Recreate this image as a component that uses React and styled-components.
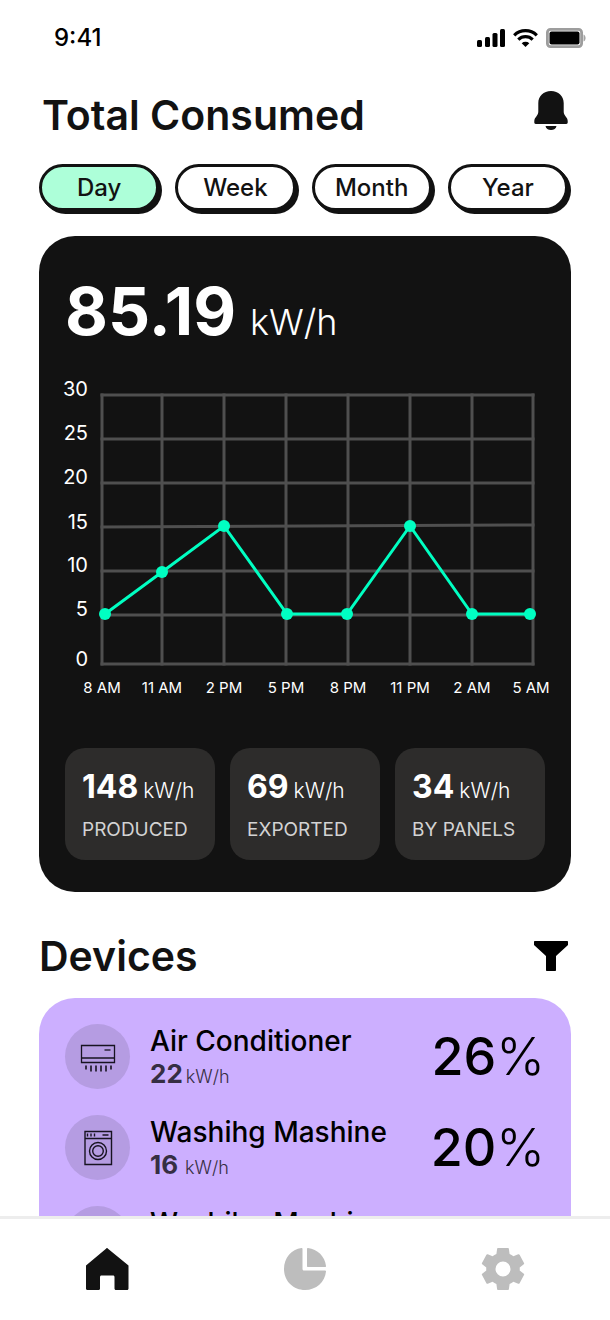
import React, { useState } from 'react'
import styled, { createGlobalStyle } from 'styled-components'

const GlobalStyle = createGlobalStyle`
  * { box-sizing: border-box; }
  body {
    margin: 0;
    background: #fff;
    color: #121212;
    font-family: Inter, sans-serif;
  }
  button { font: inherit; color: inherit; cursor: pointer; }
  h1, h2, h3, p, dl, dt, dd, ul { margin: 0; padding: 0; }
`

const Screen = styled.div`
  display: flex;
  flex-direction: column;
  height: 100vh;
  overflow: hidden;
`

const StatusBar = styled.header`
  display: flex;
  align-items: center;
  justify-content: space-between;
  flex: none;
  height: 76px;
  padding: 0 24px 0 54px;
  color: #000;
`

const Clock = styled.span`
  font-size: 24px;
  line-height: 28px;
  font-weight: 500;
`

const StatusIcons = styled.div`
  display: flex;
  align-items: center;
  gap: 8px;
`

const Content = styled.main`
  flex: 1;
  min-height: 0;
  overflow: auto;
  scrollbar-width: none;
  padding: 0 39px;
`

const SectionHead = styled.div`
  display: flex;
  align-items: center;
  justify-content: space-between;
  padding: ${({ $padding }) => $padding};
`

const Title = styled.h2`
  font-size: 41px;
  line-height: 48px;
  font-weight: 600;
`

const IconButton = styled.button`
  display: flex;
  padding: 0;
  border: 0;
  background: none;
`

const Periods = styled.div`
  display: flex;
  gap: 16px;
  padding: 10px 3px 25px 0;
`

const Period = styled.button`
  flex: 1;
  height: 47px;
  padding: 0;
  border: 3px solid #121212;
  border-radius: 24px;
  background: ${({ $active }) => ($active ? '#adffd9' : '#fff')};
  box-shadow: 1px 1px 0 #121212, 2px 2px 0 #121212, 3px 3px 0 #121212;
  font-size: 24px;
  line-height: 28px;
  font-weight: 500;
`

const Panel = styled.section`
  padding: 41px 26px 32px;
  border-radius: 36px;
  background: #121212;
  color: #fff;
`

const Total = styled.p`
  display: flex;
  align-items: baseline;
  gap: 14px;
  height: 100px;
  font-size: 66px;
  line-height: 68px;
  font-weight: 700;
`

const TotalUnit = styled.span`
  font-size: 36px;
  font-weight: 300;
`

const Chart = styled.svg`
  display: block;
  width: calc(100% + 10px);
  overflow: visible;
  font-family: Inter, sans-serif;
  fill: #fff;
`

const Stats = styled.dl`
  display: grid;
  grid-template-columns: repeat(3, 1fr);
  gap: 15px;
  padding-top: 51px;
`

const Stat = styled.div`
  display: flex;
  flex-direction: column-reverse;
  justify-content: flex-end;
  gap: 7px;
  height: 112px;
  padding: 19px 17px;
  border-radius: 20px;
  background: #2d2c2b;
`

const StatLabel = styled.dt`
  font-size: 19px;
  line-height: 24px;
  color: #d3d3d3;
`

const StatValue = styled.dd`
  display: flex;
  align-items: baseline;
  gap: 5px;
  font-size: 32px;
  line-height: 40px;
  font-weight: 700;
`

const StatUnit = styled.span`
  font-size: 21px;
  font-weight: 300;
`

const Devices = styled.ul`
  display: flex;
  flex-direction: column;
  gap: 26px;
  padding: 26px;
  border-radius: 36px 36px 0 0;
  background: #ccafff;
  color: #000;
  list-style: none;
`

const Device = styled.li`
  display: flex;
  align-items: center;
  gap: 20px;
  height: 65px;
`

const DeviceIcon = styled.span`
  display: flex;
  align-items: center;
  justify-content: center;
  flex: none;
  width: 65px;
  height: 65px;
  border-radius: 50%;
  background: #b59ce2;
`

const DeviceText = styled.div`
  flex: 1;
  padding-top: 4px;
  white-space: nowrap;
`

const DeviceName = styled.h3`
  font-size: 28px;
  line-height: 34px;
  font-weight: 500;
`

const Usage = styled.p`
  display: flex;
  align-items: baseline;
  gap: 3px;
  font-size: 26px;
  line-height: 32px;
  font-weight: 700;
  color: #362e43;
`

const UsageValue = styled.span`
  min-width: 32px;
`

const UsageUnit = styled.span`
  font-size: 18px;
  font-weight: 300;
`

const Share = styled.span`
  display: flex;
  align-items: baseline;
  font-size: 52px;
  line-height: 64px;
  font-weight: 500;
`

const Percent = styled.span`
  font-weight: 300;
`

const TabBar = styled.nav`
  display: flex;
  justify-content: space-between;
  flex: none;
  height: 104px;
  padding: 28px 84px 0;
  border-top: 3px solid #ededed;
  background: #fff;
`

const Tab = styled.a`
  display: block;
  width: 46px;
  height: 44px;
  color: ${({ $active }) => ($active ? '#121212' : '#bdbdbd')};
`

const periods = ['Day', 'Week', 'Month', 'Year']

const stats = [
  { value: 148, label: 'PRODUCED' },
  { value: 69, label: 'EXPORTED' },
  { value: 34, label: 'BY PANELS' },
]

const devices = [
  { id: 1, name: 'Air Conditioner', usage: 22, share: 26, icon: 'ac' },
  { id: 2, name: 'Washihg Mashine', usage: 16, share: 20, icon: 'washer' },
  { id: 3, name: 'Washihg Mashine', usage: 16, share: 20, icon: 'washer' },
]

// chart geometry, in viewBox units
const rows = [
  { label: 30, y: 18, textY: 19 },
  { label: 25, y: 62, textY: 63 },
  { label: 20, y: 106, textY: 107 },
  { label: 15, y: 149, textY: 152 },
  { label: 10, y: 194, textY: 195 },
  { label: 5, y: 238, textY: 239 },
  { label: 0, y: 287, textY: 289 },
]

const columns = [
  { label: '8 AM', x: 37, point: [40, 237] },
  { label: '11 AM', x: 97, point: [97, 195] },
  { label: '2 PM', x: 159, point: [159, 149] },
  { label: '5 PM', x: 221, point: [222, 237] },
  { label: '8 PM', x: 283, point: [282, 237] },
  { label: '11 PM', x: 345, point: [345, 149] },
  { label: '2 AM', x: 407, point: [407, 237] },
  { label: '5 AM', x: 468, point: [465, 237] },
]

const UsageChart = () => (
  <Chart viewBox="0 0 490 320" role="img" aria-label="Consumption by hour">
    <g stroke="#4f4f4f" strokeWidth="3" strokeLinecap="square">
      {rows.map((r) => (
        <line key={r.label} x1="37" x2="468" y1={r.label === 15 ? 150 : r.y} y2={r.label === 15 ? 148 : r.y} />
      ))}
      {columns.map((c) => (
        <line key={c.label} x1={c.x} x2={c.x} y1="18" y2="287" />
      ))}
    </g>
    <polyline
      points={columns.map((c) => c.point.join(',')).join(' ')}
      fill="none"
      stroke="#00ffc2"
      strokeWidth="3"
    />
    {columns.map((c) => (
      <circle key={c.label} cx={c.point[0]} cy={c.point[1]} r="6" fill="#00ffc2" />
    ))}
    <g fontSize="20" textAnchor="end">
      {rows.map((r) => (
        <text key={r.label} x="23" y={r.textY}>{r.label}</text>
      ))}
    </g>
    <g fontSize="15" textAnchor="middle">
      {columns.map((c) => (
        <text key={c.label} x={c.label === '5 AM' ? 466 : c.x} y="316">{c.label}</text>
      ))}
    </g>
  </Chart>
)

const SignalIcon = () => (
  <svg width="29" height="18" viewBox="0 0 29 18" fill="currentColor">
    <rect x="1" y="11" width="5" height="7" rx="1.5" />
    <rect x="9" y="8" width="5" height="10" rx="1.5" />
    <rect x="16.5" y="4" width="5" height="14" rx="1.5" />
    <rect x="24" y="0" width="5" height="18" rx="1.5" />
  </svg>
)

const WifiIcon = () => (
  <svg width="25" height="18" viewBox="0 0 25 18">
    <g fill="none" stroke="currentColor" strokeWidth="3.2">
      <path d="M1.2 6.3a16.2 16.2 0 0 1 22.6 0" />
      <path d="M5.3 10.6a10.4 10.4 0 0 1 14.4 0" />
    </g>
    <path d="M12.5 18 8.7 14.2a5.6 5.6 0 0 1 7.6 0z" fill="currentColor" />
  </svg>
)

const BatteryIcon = () => (
  <svg width="40" height="20" viewBox="0 0 40 20">
    <rect x="1.4" y="1.4" width="34.2" height="17.2" rx="3" fill="none" stroke="#9d9d9d" strokeWidth="2.8" />
    <path d="M37.5 6.5c2.8 1 2.8 6 0 7z" fill="#a5a5a5" />
    <rect x="3.5" y="3.5" width="30" height="13" rx="2" fill="currentColor" />
  </svg>
)

// the bell hangs from the top of its box, so it sits above the title's centre
const BellIcon = () => (
  <svg width="34" height="48" viewBox="0 0 34 48" fill="#121212">
    <path d="M17 0C9.500 0 4.300 5.200 4.300 12v8.500c0 2-.6 3.100-1.800 4.700C1.200 26.900.3 28 .3 30v1.500c0 .9.500 1.400 1.400 1.400h30.600c.9 0 1.400-.5 1.400-1.400V30c0-2-.9-3.100-2.200-4.800-1.200-1.600-1.800-2.700-1.800-4.700V12C29.700 5.200 24.500 0 17 0z" />
    <path d="M11.500 35h11c-.4 2.400-2.600 4-5.500 4s-5.100-1.600-5.500-4z" />
  </svg>
)

const FilterIcon = () => (
  <svg width="34" height="30" viewBox="0 0 34 30" fill="#000">
    <path d="M1 0h32c.6 0 1 .4 1 1v3L22 15v14c0 .6-.4 1-1 1h-8c-.6 0-1-.4-1-1V15L0 4V1c0-.6.4-1 1-1z" />
  </svg>
)

const AirConditionerIcon = () => (
  <svg width="36" height="36" viewBox="0 0 36 36" fill="none" stroke="#171320">
    <path d="M1.5 6.5h33v17h-33zM1.5 19h33" strokeWidth="1.3" />
    <path d="M24.5 11h6" strokeWidth="1.3" />
    <path d="M6 26.5v4M11 26.5v6M16 26.5v6M21 26.5v6M26 26.5v6M31 26.5v4" strokeWidth="1.6" />
  </svg>
)

const WasherIcon = () => (
  <svg width="36" height="36" viewBox="0 0 36 36" fill="none" stroke="#171320" strokeWidth="1.4">
    <path d="M5 1.5h26.5v33H5zM5 8.5h26.5" />
    <path d="M7.5 3.5v3M11 3.5v3M14.5 3.5v3M22.5 5h6" />
    <circle cx="18" cy="21" r="8.5" />
    <circle cx="18" cy="21" r="5.3" />
  </svg>
)

const HomeIcon = () => (
  <svg width="46" height="44" viewBox="0 0 46 44" fill="currentColor">
    <path d="M22.3 1.400c.5-.5.9-.5 1.400 0L44.500 18.500v23c0 .9-.5 1.500-1.500 1.500H32c-1 0-1.500-.6-1.500-1.500V30c0-.9-.5-1.500-1.500-1.500H17.500c-1 0-1.500.6-1.500 1.500v11.500c0 .9-.5 1.500-1.500 1.500H3.500c-1 0-1.500-.6-1.500-1.500v-23z" />
  </svg>
)

const PieIcon = () => (
  <svg width="46" height="44" viewBox="0 0 46 44" fill="currentColor">
    <path d="M19.500 1C9.500 2 2 10.800 2 22c0 12 9.300 21 21 21 11.300 0 20-8 21-18.500.1-.7-.3-1-1-1H22c-.9 0-1.500-.6-1.500-1.500V2c0-.7-.3-1.100-1-1z" />
    <path d="M26 1c9.500 1 17 8.500 18 18 .1.700-.3 1-1 1H26c-.7 0-1-.3-1-1V2c0-.7.300-1.100 1-1z" />
  </svg>
)

const GearIcon = () => (
  <svg width="46" height="44" viewBox="0 0 46 44" fill="currentColor">
    <path
      fillRule="evenodd"
      d="M18.200 1h9.600c.7 0 1 .3 1.100 1l.7 5c1.400.6 2.600 1.300 3.800 2.200l4.800-1.900c.6-.2 1-.1 1.400.5l4.400 8.100c.3.600.3 1-.2 1.400l-4.100 3.100c.1 1.100.1 2.100 0 3.200l4.100 3.100c.5.400.5.800.2 1.400l-4.400 8.100c-.4.600-.8.700-1.400.5l-4.800-1.900c-1.200.9-2.400 1.600-3.800 2.200l-.7 5c-.1.700-.4 1-1.100 1h-9.600c-.7 0-1-.3-1.100-1l-.7-5c-1.400-.6-2.600-1.300-3.800-2.200l-4.800 1.900c-.6.200-1 .1-1.400-.5L2 28.100c-.3-.6-.3-1 .2-1.400l4.100-3.100c-.1-1.100-.1-2.100 0-3.200l-4.100-3.100c-.5-.4-.5-.8-.2-1.400l4.400-8.100c.4-.6.800-.7 1.400-.5l4.800 1.900c1.200-.9 2.400-1.600 3.800-2.200l.7-5c.1-.7.400-1 1.100-1zM23 14.500a7.500 7.500 0 1 0 0 15 7.500 7.500 0 0 0 0-15z"
    />
  </svg>
)

const App = () => {
  const [period, setPeriod] = useState('Day')

  return (
    <Screen>
      <GlobalStyle />
      <StatusBar>
        <Clock>9:41</Clock>
        <StatusIcons>
          <SignalIcon />
          <WifiIcon />
          <BatteryIcon />
        </StatusIcons>
      </StatusBar>

      <Content>
        <SectionHead $padding="15px 3px">
          <Title as="h1">Total Consumed</Title>
          <IconButton aria-label="Notifications"><BellIcon /></IconButton>
        </SectionHead>

        <Periods>
          {periods.map((p) => (
            <Period key={p} $active={p === period} onClick={() => setPeriod(p)}>{p}</Period>
          ))}
        </Periods>

        <Panel>
          <Total>85.19 <TotalUnit>kW/h</TotalUnit></Total>
          <UsageChart />
          <Stats>
            {stats.map((s) => (
              <Stat key={s.label}>
                <StatLabel>{s.label}</StatLabel>
                <StatValue>{s.value} <StatUnit>kW/h</StatUnit></StatValue>
              </Stat>
            ))}
          </Stats>
        </Panel>

        <SectionHead $padding="40px 3px 18px 0">
          <Title>Devices</Title>
          <IconButton aria-label="Filter devices"><FilterIcon /></IconButton>
        </SectionHead>

        <Devices>
          {devices.map((d) => (
            <Device key={d.id}>
              <DeviceIcon>{d.icon === 'ac' ? <AirConditionerIcon /> : <WasherIcon />}</DeviceIcon>
              <DeviceText>
                <DeviceName>{d.name}</DeviceName>
                <Usage>
                  <UsageValue>{d.usage}</UsageValue>
                  <UsageUnit>kW/h</UsageUnit>
                </Usage>
              </DeviceText>
              <Share>{d.share}<Percent>%</Percent></Share>
            </Device>
          ))}
        </Devices>
      </Content>

      <TabBar>
        <Tab href="#home" aria-label="Home" $active><HomeIcon /></Tab>
        <Tab href="#stats" aria-label="Statistics"><PieIcon /></Tab>
        <Tab href="#settings" aria-label="Settings"><GearIcon /></Tab>
      </TabBar>
    </Screen>
  )
}

export default App
